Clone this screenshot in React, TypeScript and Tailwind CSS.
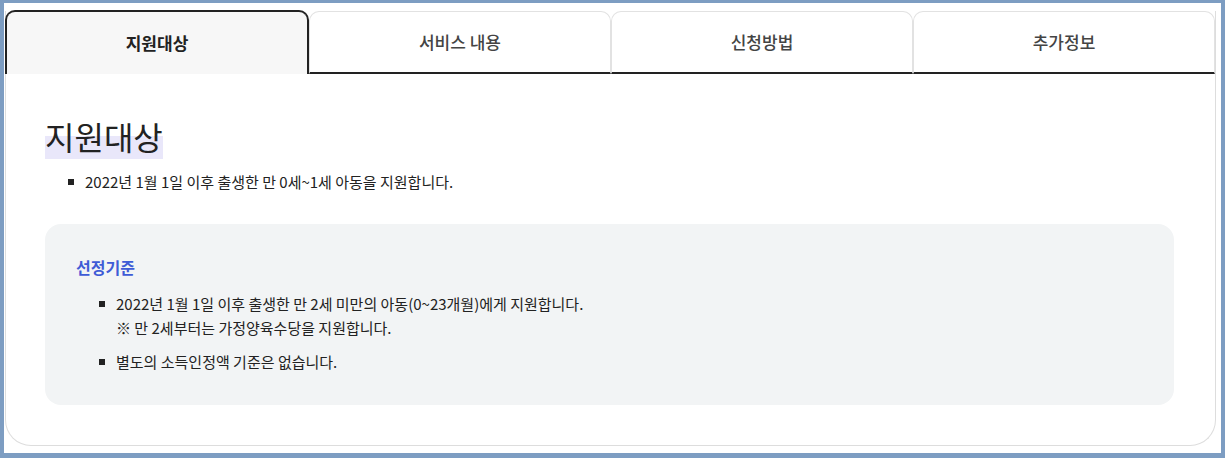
import React from "react";

const tabs = ["지원대상", "서비스 내용", "신청방법", "추가정보"];

export default function App() {
  return (
    <div
      className="w-[1225px] h-[458px] bg-[#7d9dc2] pt-[3px] pb-[5px] px-[4px]"
      style={{ fontFamily: '"Noto Sans CJK KR", "Noto Sans", sans-serif' }}
    >
      <div className="h-full bg-white pt-[8px] pl-[1px] pr-[5px]">
        <div className="h-[435px] rounded-b-[26px] border-x border-b border-[#dddddd] flex flex-col">
          <div className="flex h-[63px]">
            {tabs.map((t, i) =>
              i === 0 ? (
                <div
                  key={t}
                  className="flex-1 flex items-center justify-center rounded-t-[10px] border-2 border-b-0 border-[#222] bg-[#f7f7f7] text-[17px] font-bold text-[#222] -mt-[1px] -ml-[1px]"
                >
                  {t}
                </div>
              ) : (
                <div
                  key={t}
                  className="flex-1 flex items-center justify-center rounded-t-[10px] border border-b-2 border-[#e2e2e2] border-b-[#222] bg-white text-[17px] font-medium text-[#444]"
                >
                  {t}
                </div>
              )
            )}
          </div>
          <div className="pl-[39px] pr-[41px] pt-[42px]">
            <h2 className="text-[32px] leading-[40px] text-[#222] font-normal">
              <span className="bg-[linear-gradient(transparent_50%,#e9e7fa_50%)]">지원대상</span>
            </h2>
            <ul className="mt-[14px] pl-[23px] text-[15px] leading-[24px] text-[#222]">
              <li className="flex items-start">
                <span className="w-[6px] h-[6px] bg-[#222] mt-[9px] mr-[11px] shrink-0" />
                <span>2022년 1월 1일 이후 출생한 만 0세~1세 아동을 지원합니다.</span>
              </li>
            </ul>
            <div className="mt-[30px] h-[181px] rounded-[16px] bg-[#f2f4f5] pl-[31px] pt-[31px]">
              <h3 className="text-[16px] leading-[24px] font-bold text-[#3f5bd6]">선정기준</h3>
              <ul className="mt-[13px] pl-[23px] text-[15px] leading-[24px] text-[#222] flex flex-col gap-[10px]">
                <li className="flex items-start">
                  <span className="w-[6px] h-[6px] bg-[#222] mt-[9px] mr-[11px] shrink-0" />
                  <span>
                    2022년 1월 1일 이후 출생한 만 2세 미만의 아동(0~23개월)에게 지원합니다.
                    <br />※ 만 2세부터는 가정양육수당을 지원합니다.
                  </span>
                </li>
                <li className="flex items-start">
                  <span className="w-[6px] h-[6px] bg-[#222] mt-[9px] mr-[11px] shrink-0" />
                  <span>별도의 소득인정액 기준은 없습니다.</span>
                </li>
              </ul>
            </div>
          </div>
        </div>
      </div>
    </div>
  );
}
